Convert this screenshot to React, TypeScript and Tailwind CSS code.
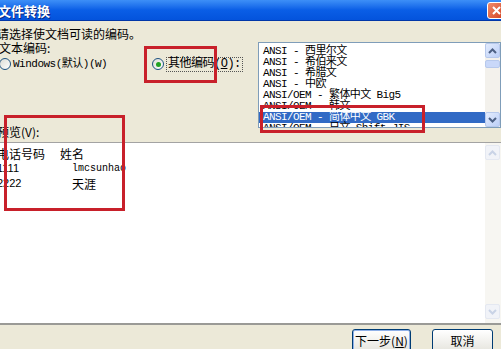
import React from 'react';

const cjk = "font-['Noto_Sans_CJK_SC',sans-serif]";
const mono = "font-['Liberation_Mono','Noto_Sans_CJK_SC',monospace]";

const encodings = [
    'ANSI - 西里尔文',
    'ANSI - 希伯来文',
    'ANSI - 希腊文',
    'ANSI - 中欧',
    'ANSI/OEM - 繁体中文 Big5',
    'ANSI/OEM - 韩文',
    'ANSI/OEM - 简体中文 GBK',
    'ANSI/OEM - 日文 Shift-JIS',
];

const Radio = ({ checked }: { checked?: boolean }) => (
    <span className="w-[12px] h-[12px] rounded-full border border-[#1c5180] bg-gradient-to-br from-[#dcdcd5] to-white flex items-center justify-center shrink-0">
        {checked && <span className="w-[5px] h-[5px] rounded-full bg-[#21a121]" />}
    </span>
);

const Arrow = ({ up, faded }: { up?: boolean; faded?: boolean }) => (
    <svg width="9" height="6" viewBox="0 0 9 6">
        <path
            d={up ? 'M1 5 L4.5 1.5 L8 5' : 'M1 1 L4.5 4.5 L8 1'}
            fill="none"
            stroke={faded ? '#c9d3e6' : '#4d6185'}
            strokeWidth="2"
        />
    </svg>
);

const ScrollBtn = ({ up, faded }: { up?: boolean; faded?: boolean }) => (
    <div
        className={`h-[15px] w-full rounded-[2px] border flex items-center justify-center ${faded
            ? 'border-[#e4e8f1] bg-[#f1f3f8]'
            : 'border-[#b7c9ec] bg-gradient-to-br from-[#e3ecfd] to-[#bccff7]'
            }`}
    >
        <Arrow up={up} faded={faded} />
    </div>
);

export default function App() {
    return (
        <div className="relative w-[501px] h-[349px] overflow-hidden bg-[#ece9d8] flex flex-col">
            {/* 标题栏 */}
            <div className="h-[21px] shrink-0 flex items-center justify-between bg-gradient-to-b from-[#3d8ff7] via-[#0a5ee6] to-[#0453dc] border-b border-[#0036a8]">
                <span className={`${cjk} ml-[-2px] text-[13px] font-bold text-white leading-none [text-shadow:1px_1px_0_#0a2a80]`}>
                    文件转换
                </span>
                <div className="mr-[-4px] w-[18px] h-[17px] rounded-[3px] border border-white bg-gradient-to-br from-[#f08a6a] to-[#d3401e] flex items-center justify-center">
                    <svg width="9" height="9" viewBox="0 0 9 9">
                        <path d="M1 1 L8 8 M8 1 L1 8" stroke="white" strokeWidth="2" />
                    </svg>
                </div>
            </div>

            {/* 编码选择 */}
            <div className="h-[121px] shrink-0 flex">
                <div className="w-[258px] flex flex-col text-black">
                    <div className={`${cjk} pt-[6px] text-[12px] leading-[14px] ml-[-3px]`}>请选择使文档可读的编码。</div>
                    <div className={`${cjk} text-[12px] leading-[13px] ml-[-1px]`}>文本编码:</div>
                    <div className="mt-[3px] h-[14px] flex items-center">
                        <div className="w-[153px] flex items-center gap-[2px] ml-[-1px]">
                            <Radio />
                            <span className={`${mono} text-[11px] tracking-[-0.5px] leading-none`}>Windows(默认)(W)</span>
                        </div>
                        <div className="flex items-center gap-[2px]">
                            <Radio checked />
                            <span className={`${mono} text-[12px] tracking-[-0.5px] leading-[13px] border border-dotted border-[#555] px-[1px]`}>
                                其他编码(<span className="underline">O</span>):
                            </span>
                        </div>
                    </div>
                    <div className={`${cjk} mt-auto pb-[3px] text-[12px] leading-[14px] ml-[-3px]`}>预览(V):</div>
                </div>

                <div className="mt-[21px] h-[86px] w-[243px] border border-[#7f9db9] bg-white flex overflow-hidden">
                    <div className="flex-1 pt-[3px] overflow-hidden">
                        {encodings.map((e, i) => (
                            <div
                                key={e}
                                className={`${mono} h-[11px] pl-[4px] text-[11px] tracking-[-0.6px] leading-[11px] whitespace-nowrap ${i === 6 ? 'bg-[#316ac5] text-white' : 'text-black'
                                    }`}
                            >
                                {e}
                            </div>
                        ))}
                    </div>
                    <div className="w-[15px] h-full bg-[#f3f1ec] flex flex-col">
                        <ScrollBtn up />
                        <div className="mt-[2px] h-[8px] rounded-[2px] border border-[#b7c9ec] bg-[#c9d8f9]" />
                        <div className="flex-1" />
                        <ScrollBtn />
                    </div>
                </div>
            </div>

            {/* 预览 */}
            <div className="h-[181px] shrink-0 bg-white border-t border-[#a3a3a3] flex">
                <div className="flex-1 pt-[3px] text-black">
                    <div className={`${cjk} h-[15px] flex items-center text-[12px] leading-none`}>
                        <span className="ml-[-3px] w-[63px]">电话号码</span>
                        <span>姓名</span>
                    </div>
                    <div className="h-[15px] flex items-center">
                        <span className="ml-[-3px] w-[75px] font-['Liberation_Sans',sans-serif] text-[11px] leading-none">1111</span>
                        <span className="font-['Liberation_Mono',monospace] text-[10px] leading-none">lmcsunhao</span>
                    </div>
                    <div className="h-[15px] flex items-center">
                        <span className="ml-[-3px] w-[75px] font-['Liberation_Sans',sans-serif] text-[11px] leading-none">2222</span>
                        <span className={`${cjk} text-[12px] leading-none`}>天涯</span>
                    </div>
                </div>
                <div className="w-[16px] h-full bg-[#f7f6f2] flex flex-col pt-[2px] pb-[4px] pr-[1px]">
                    <ScrollBtn up faded />
                    <div className="flex-1" />
                    <ScrollBtn faded />
                </div>
            </div>

            {/* 按钮 */}
            <div className="flex-1 border-t-2 border-[#9a9a96] flex items-start justify-end gap-[21px] pr-[8px] pt-[4px]">
                <button className={`${cjk} w-[59px] h-[23px] rounded-[3px] border border-[#003c74] bg-gradient-to-b from-white to-[#e6e5de] text-[12px] leading-none text-black shadow-[inset_0_0_0_1px_#8fb0e8]`}>
                    下一步(<span className="underline">N</span>)
                </button>
                <button className={`${cjk} w-[61px] h-[23px] rounded-[3px] border border-[#003c74] bg-gradient-to-b from-white to-[#e6e5de] text-[12px] leading-none text-black`}>
                    取消
                </button>
            </div>

            {/* 红色标注框 */}
            <div className="absolute left-[144px] top-[46px] w-[73px] h-[37px] border-[3px] border-[#c8202a]" />
            <div className="absolute left-[260px] top-[105px] w-[165px] h-[28px] border-[3px] border-[#c8202a]" />
            <div className="absolute left-[4px] top-[115px] w-[121px] h-[96px] border-[3px] border-[#c8202a]" />
        </div>
    );
}
